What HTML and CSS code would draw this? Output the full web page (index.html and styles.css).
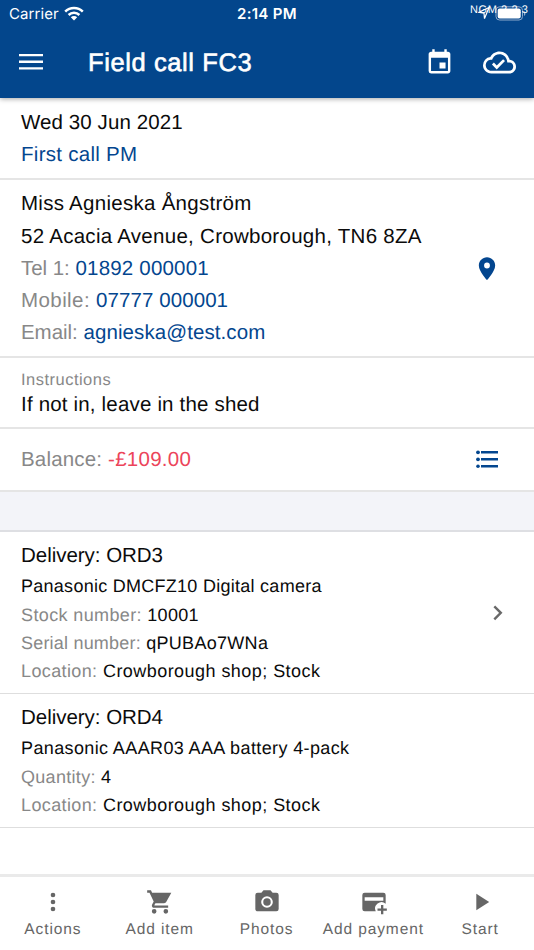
FILE: index.html
```html
<!DOCTYPE html>
<html lang="en">
<head>
<meta charset="utf-8">
<title>Field call FC3</title>
<link rel="stylesheet" href="styles.css">
</head>
<body>
<header class="header">
  <div class="status">
    <span class="carrier">Carrier</span>
    <svg class="wifi" width="20" height="15" viewBox="0 0 20 15"><g fill="none" stroke="#fff" stroke-width="2.5"><path d="M1.2 5.6a12.4 12.4 0 0 1 17.6 0"/><path d="M4.6 9a7.7 7.7 0 0 1 10.8 0"/></g><path fill="#fff" d="M6.8 11.3a4.6 4.6 0 0 1 6.4 0L10 14.6z"/></svg>
    <span class="time">2:14 PM</span>
    <svg class="location" width="12" height="14" viewBox="0 0 12 14"><path fill="none" stroke="#fff" stroke-width="1.2" d="M11 1.5 1 6.200l5 .9.5 5.500z"/></svg>
    <svg class="battery" width="32" height="15" viewBox="0 0 32 15"><rect x="1" y=".8" width="26.5" height="13.2" rx="3.5" fill="none" stroke="#8ea9cb"/><rect x="2.7" y="2.600" width="23" height="9.800" rx="2" fill="#fff"/><path fill="#8ea9cb" d="M29 5c2 1 2 4 0 5z"/></svg>
    <span class="version">NGM 2.2.3</span>
  </div>
  <div class="toolbar">
    <svg class="menu" width="24" height="18" viewBox="0 0 24 18"><path fill="#fff" d="M0 1h24v2.300H0zM0 7.600h24v2.300H0zM0 14.200h24v2.300H0z"/></svg>
    <h1 class="title">Field call FC3</h1>
    <svg class="calendar" width="29" height="29" viewBox="0 0 24 24"><path fill="#fff" d="M17 12h-5v5h5zM16 1v2H8V1H6v2H5c-1.100 0-2 .9-2 2v14a2 2 0 0 0 2 2h14c1.100 0 2-.9 2-2V5c0-1.100-.9-2-2-2h-1V1zm3 18H5V8h14z"/></svg>
    <svg class="cloud" width="33" height="33" viewBox="0 0 24 24"><path fill="#fff" d="M19.350 10.040A7.490 7.490 0 0 0 12 4C9.110 4 6.600 5.640 5.350 8.040A5.994 5.994 0 0 0 0 14c0 3.310 2.690 6 6 6h13c2.760 0 5-2.240 5-5 0-2.640-2.050-4.780-4.650-4.960zM19 18H6c-2.210 0-4-1.790-4-4 0-2.050 1.530-3.760 3.560-3.970l1.070-.11.5-.95A5.469 5.469 0 0 1 12 6c2.620 0 4.880 1.860 5.390 4.430l.3 1.500 1.530.11A2.980 2.980 0 0 1 22 15c0 1.650-1.350 3-3 3zm-9-3.820-2.090-2.090L6.500 13.500 10 17l6.010-6.010-1.410-1.410z"/></svg>
  </div>
</header>
<main class="content">
  <section class="row schedule">
    <p class="line snug">Wed 30 Jun 2021</p>
    <p class="line link wide">First call PM</p>
  </section>
  <section class="row contact">
    <div class="body">
      <p class="line wide">Miss Agnieska Ångström</p>
      <p class="line wide">52 Acacia Avenue, Crowborough, TN6 8ZA</p>
      <p class="line"><span class="label tight">Tel 1:</span> <span class="link">01892 000001</span></p>
      <p class="line"><span class="label loose">Mobile:</span> <span class="link snug">07777 000001</span></p>
      <p class="line"><span class="label tight">Email:</span> <span class="link snug">agnieska@test.com</span></p>
    </div>
    <svg class="pin" width="28" height="28" viewBox="0 0 24 24"><path fill="#03468f" d="M12 2C8.130 2 5 5.130 5 9c0 5.250 7 12.500 7 12.500s7-7.250 7-12.500c0-3.870-3.130-7-7-7zm0 9.500a2.500 2.500 0 1 1 0-5 2.500 2.500 0 0 1 0 5z"/></svg>
  </section>
  <section class="row instructions">
    <p class="caption">Instructions</p>
    <p class="line">If not in, leave in the shed</p>
  </section>
  <section class="row balance">
    <p class="line body"><span class="label">Balance:</span> <span class="debt wide">-£109.00</span></p>
    <svg class="list" width="22" height="18" viewBox="0 0 22 18"><g fill="#03468f"><circle cx="2" cy="2.300" r="1.900"/><circle cx="2" cy="9.300" r="1.900"/><circle cx="2" cy="16.200" r="1.800"/><path d="M5 1h17v2.500H5zM5 8h17v2.500H5zM5 15h17v2.500H5z"/></g></svg>
  </section>
  <div class="gap"></div>
  <section class="row order first">
    <div class="body">
      <h2 class="heading">Delivery: ORD3</h2>
      <p class="detail wide">Panasonic DMCFZ10 Digital camera</p>
      <p class="detail"><span class="label loose">Stock number:</span> 10001</p>
      <p class="detail"><span class="label snug">Serial number:</span> qPUBAo7WNa</p>
      <p class="detail place"><span class="label">Location:</span> Crowborough shop; Stock</p>
    </div>
    <svg class="chevron" width="10" height="16" viewBox="0 0 10 16"><path fill="none" stroke="#696969" stroke-width="2.400" d="m1.300 1.300 6.500 6.500-6.500 6.500"/></svg>
  </section>
  <section class="row order second">
    <div class="body">
      <h2 class="heading">Delivery: ORD4</h2>
      <p class="detail loose">Panasonic AAAR03 AAA battery 4-pack</p>
      <p class="detail"><span class="label">Quantity:</span> 4</p>
      <p class="detail place"><span class="label">Location:</span> Crowborough shop; Stock</p>
    </div>
  </section>
</main>
<nav class="tabs">
  <a class="tab"><svg width="28" height="28" viewBox="0 0 24 24"><path d="M12 8a2 2 0 1 0 0-4 2 2 0 0 0 0 4zm0 2a2 2 0 1 0 0 4 2 2 0 0 0 0-4zm0 6a2 2 0 1 0 0 4 2 2 0 0 0 0-4z"/></svg><span>Actions</span></a>
  <a class="tab"><svg width="28" height="28" viewBox="0 0 24 24"><path d="M7 18a2 2 0 1 0 0 4 2 2 0 0 0 0-4zM1 2v2h2l3.600 7.590-1.350 2.450C4.520 15.370 5.480 17 7 17h12v-2H7.420a.25.25 0 0 1-.22-.37L8.100 13h7.450c.75 0 1.410-.41 1.750-1.030L21.700 4H5.210l-.94-2zm16 16a2 2 0 1 0 0 4 2 2 0 0 0 0-4z"/></svg><span>Add item</span></a>
  <a class="tab"><svg width="28" height="28" viewBox="0 0 24 24"><circle cx="12" cy="12" r="3.200"/><path d="M9 2 7.170 4H4a2 2 0 0 0-2 2v12c0 1.100.9 2 2 2h16a2 2 0 0 0 2-2V6a2 2 0 0 0-2-2h-3.170L15 2zm3 15a5 5 0 1 1 0-10 5 5 0 0 1 0 10z"/></svg><span>Photos</span></a>
  <a class="tab"><svg width="28" height="28" viewBox="0 0 24 24"><path fill-rule="evenodd" d="M4 4h16a2 2 0 0 1 2 2v7.400a5.500 5.500 0 0 0-8.500 6.600H4a2 2 0 0 1-2-2V6a2 2 0 0 1 2-2zm0 4v3h16V8z"/><path d="M18 14.500h2v3h3v2h-3v3h-2v-3h-3v-2h3z"/></svg><span>Add payment</span></a>
  <a class="tab"><svg width="28" height="28" viewBox="0 0 24 24"><path d="M8 5v14l11-7z"/></svg><span>Start</span></a>
</nav>
</body>
</html>
```
FILE: styles.css
```css
* { box-sizing: border-box; }
body {
  margin: 0;
  width: 534px;
  height: 950px;
  display: flex;
  flex-direction: column;
  overflow: hidden;
  background: #fff;
  color: #0b0b0b;
  font-family: "Liberation Sans", Arial, sans-serif;
  text-rendering: geometricPrecision;
}
p, h1, h2 { margin: 0; font-weight: 400; white-space: nowrap; }
svg { display: block; flex: none; }
.header {
  position: relative;
  height: 98px;
  flex: none;
  background: #03468c;
  color: #fff;
  box-shadow: 0 1px 5px rgba(0, 0, 0, .35);
}
.status {
  position: relative;
  display: flex;
  height: 28px;
  padding-left: 9px;
  font-family: Inter, "Liberation Sans", sans-serif;
  font-size: 15px;
  line-height: 28px;
}
.carrier { width: 56px; letter-spacing: .1px; }
.wifi { margin-top: 6px; margin-left: -1px; }
.time { width: 62px; margin-left: 153px; font-weight: 600; font-size: 15px; letter-spacing: .3px; white-space: nowrap; }
.location { margin: 6px 0 0 179px; }
.battery { margin: 6px 0 0 5px; }
.version {
  position: absolute;
  left: 470px;
  top: 3px;
  font-family: "Liberation Sans", sans-serif;
  font-size: 11px;
  line-height: 14px;
  letter-spacing: .6px;
  white-space: nowrap;
}
.toolbar { display: flex; align-items: center; height: 68px; padding-left: 19px; }
.title { width: 337px; margin-left: 45px; padding-top: 2px; font-size: 25.5px; line-height: 30px; letter-spacing: .6px; -webkit-text-stroke: .6px #fff; }
.cloud { margin-left: 29px; }
.content { flex: 1; min-height: 0; }
.row { padding-left: 21px; border-bottom: 2px solid #e5e5e5; }
.line { height: 32.3px; font-size: 20.5px; line-height: 32.3px; letter-spacing: .18px; }
.label, .caption { color: #888; }
.link { color: #03468f; }
.debt { color: #ec445a; }
.line.wide { letter-spacing: .28px; }
.line.snug, .line .snug { letter-spacing: .09px; }
.line .wide { letter-spacing: .25px; }
.line .tight { letter-spacing: -.06px; }
.line .loose { letter-spacing: .42px; }
.body { flex: 1; }
.schedule { height: 82px; padding-top: 9px; }
.contact { display: flex; align-items: center; height: 178px; padding-top: 1px; }
.contact .body { padding-top: 1px; }
.pin { margin-right: 33px; }
.list { margin: -2px 36px 0 0; }
.instructions { height: 71px; padding-top: 11px; }
.caption { height: 20px; font-size: 16.5px; line-height: 23px; letter-spacing: .48px; }
.instructions .line { line-height: 31px; }
.balance { display: flex; align-items: center; height: 63px; }
.balance .line { height: 31px; }
.gap { height: 40px; background: #f3f4f9; border-bottom: 2px solid #dedfe3; }
.order { display: flex; align-items: center; border-width: 1px; border-color: #dedede; }
.first { height: 162px; }
.second { height: 134px; }
.order .body { padding-top: 1px; }
.heading { height: 32px; font-size: 20.5px; line-height: 32px; letter-spacing: -.03px; }
.detail { height: 28.4px; font-size: 18px; line-height: 28.4px; letter-spacing: .3px; }
.detail.wide { letter-spacing: .27px; }
.detail.loose, .detail .loose { letter-spacing: .38px; }
.detail .snug { letter-spacing: .2px; }
.detail.place { letter-spacing: .45px; }
.detail.place .label { letter-spacing: .38px; }
.chevron { margin-right: 31px; }
.tabs { display: flex; flex: none; height: 76px; border-top: 3px solid #eaeaea; color: #666; }
.tab { flex: 1; display: flex; flex-direction: column; align-items: center; padding-top: 11px; font-size: 15.5px; line-height: 20px; letter-spacing: .9px; white-space: nowrap; }
.tab svg { fill: #666; }
.tab span { margin: 4px 1px 0 0; }
```
